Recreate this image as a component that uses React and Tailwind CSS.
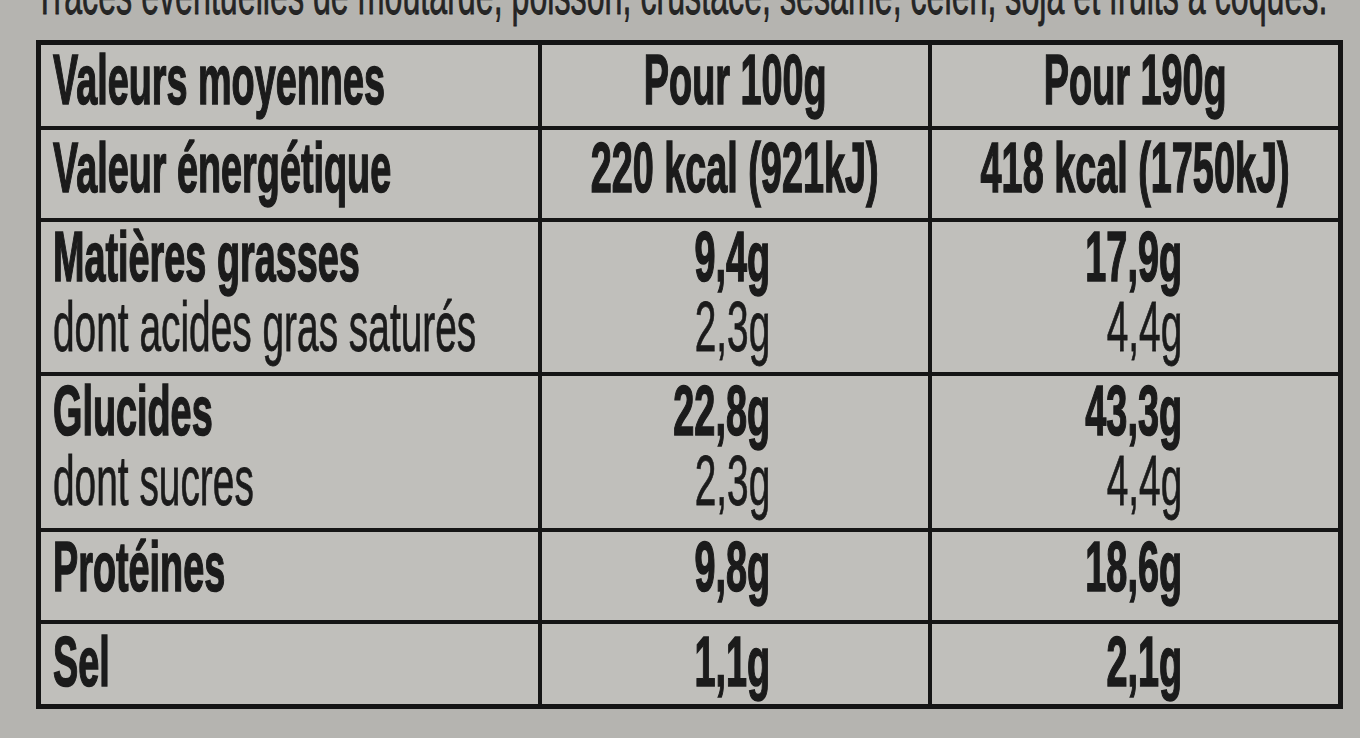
import React from "react";

function T({ children, bold, origin }) {
  const o =
    origin === "right" ? "origin-right" : origin === "center" ? "origin-center" : "origin-left";
  return (
    <span
      className={`inline-block shrink-0 whitespace-nowrap ${
        bold
          ? "font-bold scale-x-[0.54] [-webkit-text-stroke:1.6px_#1b1b1b]"
          : "font-normal scale-x-[0.555] [-webkit-text-stroke:0.8px_#1b1b1b]"
      } ${o}`}
    >
      {children}
    </span>
  );
}

const cellBase = "bg-[#c0bfbb] flex flex-col text-[70px] leading-[70px] overflow-visible";

function Left({ lines, pt }) {
  return (
    <div className={`${cellBase} items-start pl-[12px] ${pt ? "pt-[3px]" : ""}`}>
      {lines.map((l, i) => (
        <T key={i} bold={l.b} origin="left">
          {l.t}
        </T>
      ))}
    </div>
  );
}

function Center({ text, pt }) {
  return (
    <div className={`${cellBase} items-center ${pt ? "pt-[3px]" : ""}`}>
      <T bold origin="center">
        {text}
      </T>
    </div>
  );
}

function Right({ lines, col, pt }) {
  return (
    <div
      className={`${cellBase} items-end ${col === 2 ? "pr-[158px]" : "pr-[156px]"} ${
        pt ? "pt-[3px]" : ""
      }`}
    >
      {lines.map((l, i) => (
        <T key={i} bold={l.b} origin="right">
          {l.t}
        </T>
      ))}
    </div>
  );
}

export default function App() {
  return (
    <div className="w-[1360px] h-[738px] overflow-hidden bg-[#b5b4b0] text-[#1b1b1b] font-['Liberation_Sans',Arial,sans-serif]">
      <div className="h-[40px] overflow-hidden pl-[35px]">
        <div className="-mt-[35px] flex text-[58px] leading-[58px] text-[#262626]">
          <T origin="left">
            Traces éventuelles de moutarde, poisson, crustacé, sésame, céleri, soja et fruits à coques.
          </T>
        </div>
      </div>
      <div className="ml-[36px] w-[1307px] grid bg-[#151515] p-[5px] gap-[4px] grid-cols-[497px_386px_406px] grid-rows-[81px_88px_150px_152px_88px_80px]">
        <Left lines={[{ t: "Valeurs moyennes", b: true }]} />
        <Center text="Pour 100g" />
        <Center text="Pour 190g" />

        <Left pt lines={[{ t: "Valeur énergétique", b: true }]} />
        <Center pt text="220 kcal (921kJ)" />
        <Center pt text="418 kcal (1750kJ)" />

        <Left
          lines={[
            { t: "Matières grasses", b: true },
            { t: "dont acides gras saturés", b: false },
          ]}
        />
        <Right col={2} lines={[{ t: "9,4g", b: true }, { t: "2,3g", b: false }]} />
        <Right col={3} lines={[{ t: "17,9g", b: true }, { t: "4,4g", b: false }]} />

        <Left
          lines={[
            { t: "Glucides", b: true },
            { t: "dont sucres", b: false },
          ]}
        />
        <Right col={2} lines={[{ t: "22,8g", b: true }, { t: "2,3g", b: false }]} />
        <Right col={3} lines={[{ t: "43,3g", b: true }, { t: "4,4g", b: false }]} />

        <Left lines={[{ t: "Protéines", b: true }]} />
        <Right col={2} lines={[{ t: "9,8g", b: true }]} />
        <Right col={3} lines={[{ t: "18,6g", b: true }]} />

        <Left pt lines={[{ t: "Sel", b: true }]} />
        <Right pt col={2} lines={[{ t: "1,1g", b: true }]} />
        <Right pt col={3} lines={[{ t: "2,1g", b: true }]} />
      </div>
    </div>
  );
}
